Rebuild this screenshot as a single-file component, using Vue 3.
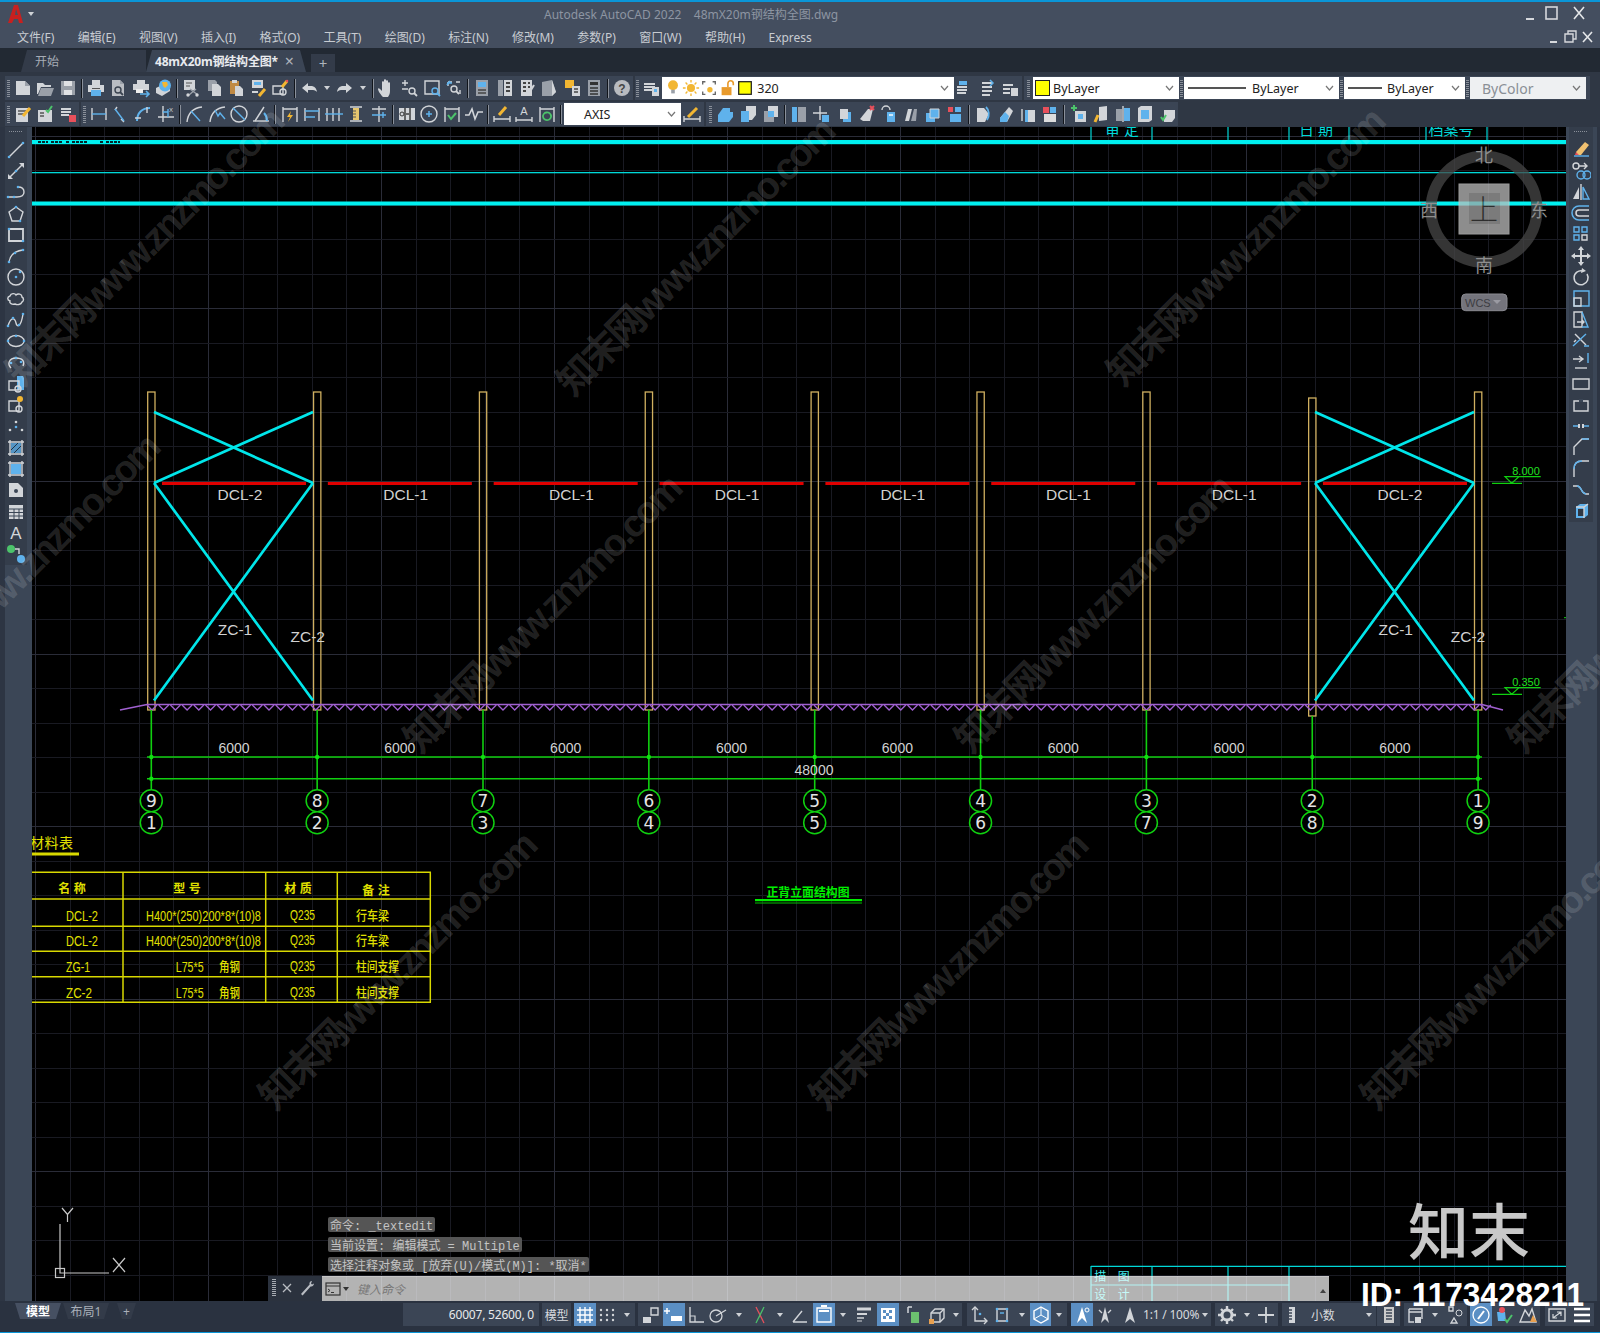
<template>
  <div class="app">
    <!-- title bar -->
    <div class="titlebar">
      <svg class="logo" width="16" height="20" viewBox="0 0 16 20"><path d="M6 1h4l5 18h-4l-1-4H6l-2 4H0z M7 11h3L8 5z" fill="#c8201f" fill-rule="evenodd" /></svg>
      <span class="logo-drop"></span>
      <span class="title">Autodesk AutoCAD 2022 &nbsp;&nbsp; 48mX20m钢结构全图.dwg</span>
      <svg class="winbtns" width="70" height="18" viewBox="0 0 70 18">
        <path d="M2 14h8" stroke="#d6d8dc" stroke-width="2" />
        <rect x="22" y="2" width="11" height="12" fill="none" stroke="#d6d8dc" stroke-width="1.6" />
        <path d="M50 2l10 12M60 2L50 14" stroke="#e4e6e8" stroke-width="1.6" />
      </svg>
    </div>
    <!-- menu -->
    <div class="menubar">
      <span v-for="m in menus" :key="m">{{ m }}</span>
      <svg class="docbtns" width="46" height="16" viewBox="0 0 46 16">
        <path d="M1 13h7" stroke="#d6d8dc" stroke-width="2" />
        <path d="M16 5h8v8h-8z M19 5V2h8v8h-3" fill="none" stroke="#d6d8dc" stroke-width="1.4" />
        <path d="M34 3l9 10M43 3l-9 10" stroke="#e4e6e8" stroke-width="1.6" />
      </svg>
    </div>
    <!-- file tabs -->
    <div class="tabbar">
      <div class="ftab home">开始</div>
      <div class="ftab active">48mX20m钢结构全图*<span class="tab-x">×</span></div>
      <div class="ftab plus">+</div>
    </div>
    <!-- toolbars -->
    <div class="toolbars">
      <div v-for="(row, ri) in rows" :key="ri" class="tb-row">
        <div v-for="(g, gi) in row" :key="gi" class="tb-group" :style="{ width: g.w + 'px' }">
          <template v-for="(it, i) in g.items" :key="i">
            <i v-if="it === '|'" class="sep"></i>
            <i v-else-if="it === ':'" class="grip"></i>
            <i v-else-if="it === '::'" class="grip wide"></i>
            <span v-else-if="it === 'v'" class="drop"></span>
            <div v-else-if="it.combo" class="combo" :class="{ dim: it.dim }" :style="{ width: it.combo + 'px' }">
              <svg v-for="ic in it.icons" :key="ic" class="ci" width="18" height="20" viewBox="0 0 20 20" v-html="icons[ic]"></svg>
              <i v-if="it.swatch" class="swatch"></i>
              <i v-if="it.line" class="lineweight" :style="{ width: it.line + 'px' }"></i>
              <span class="combo-text" :style="{ marginLeft: (it.ml || 0) + 'px' }">{{ it.text }}</span>
              <svg class="chev" width="9" height="6" viewBox="0 0 9 6"><path d="M1 1l3.5 4L8 1" fill="none" stroke="#777" stroke-width="1.2" /></svg>
            </div>
            <span v-else class="btn"><svg width="20" height="20" viewBox="0 0 20 20" v-html="icons[it]"></svg></span>
          </template>
        </div>
      </div>
    </div>
    <!-- middle -->
    <div class="main">
      <div class="side left">
        <div class="side-panel">
          <i class="hgrip"></i>
          <span v-for="ic in leftTools" :key="ic" class="side-btn"><svg width="20" height="20" viewBox="0 0 20 20" v-html="icons[ic]"></svg></span>
        </div>
      </div>
      <div class="canvas">
        <svg class="drawing" viewBox="32 127 1534 1174" width="1534" height="1174">
          <!-- grid -->
          <path v-for="x in gridX" :key="'x' + x.v" :d="`M${x.v} 127V1301`" :stroke="x.major ? '#2a2c38' : '#191a22'" shape-rendering="crispEdges" />
          <path v-for="y in gridY" :key="'y' + y.v" :d="`M32 ${y.v}H1566`" :stroke="y.major ? '#2a2c38' : '#191a22'" shape-rendering="crispEdges" />

          <!-- title block clipped at the top -->
          <path v-for="x in [1091, 1152, 1228, 1289, 1349, 1426, 1487]" :key="'t' + x" :d="`M${x} 127V142`" stroke="#00d8d8" stroke-width="1.2" />
          <text x="1122" y="135" class="cy">审 定</text>
          <text x="1316" y="135" class="cy">日 期</text>
          <text x="1451" y="135" class="cy">档案号</text>
          <rect x="32" y="140" width="1534" height="4.2" fill="#00f0f0" />
          <path d="M38 142h10M51 142h12M66 142h3M72 142h16M100 142h3M106 142h14" stroke="#03252b" stroke-width="2" stroke-dasharray="3 1" />
          <rect x="32" y="172" width="1534" height="1.3" fill="#00d8d8" />
          <rect x="32" y="201.5" width="1534" height="4" fill="#00f0f0" />

          <!-- columns -->
          <rect v-for="(c, i) in cols" :key="'c' + i" :x="c - 3.6" :y="i === 7 ? 398 : 392" width="7.3" :height="318" fill="none" stroke="#d0b060" stroke-width="1.3" />
          <!-- bracing -->
          <path v-for="b in bays" :key="'b' + b" :d="`M${b} 412L${b + 159} 483M${b + 159} 412L${b} 483M${b} 483L${b + 159} 700.5M${b + 159} 483L${b} 700.5`" fill="none" stroke="#00e6ea" stroke-width="2.7" />
          <!-- crane beams -->
          <rect v-for="i in 8" :key="'r' + i" :x="162 + (i - 1) * 165.85" y="482" width="144" height="3" fill="#e00000" />
          <text v-for="(l, i) in beams" :key="'l' + i" :x="240 + i * 165.7" y="499.5" class="lbl">{{ l }}</text>
          <text x="235" y="635" class="lbl">ZC-1</text>
          <text x="307.7" y="642" class="lbl">ZC-2</text>
          <text x="1395.7" y="635" class="lbl">ZC-1</text>
          <text x="1468" y="642" class="lbl">ZC-2</text>

          <!-- ground -->
          <path :d="zigzag" fill="none" stroke="#a060d0" stroke-width="1.3" />
          <path d="M120 710L147 704.5H1482L1503 710" fill="none" stroke="#a060d0" stroke-width="1.6" />

          <!-- dimensions -->
          <path v-for="(c, i) in cols" :key="'v' + i" :d="`M${c} ${i === 7 ? 716 : 710}V789`" stroke="#10d010" stroke-width="1.6" />
          <path d="M147 757H1482M147 778.7H1482" stroke="#10d010" stroke-width="1.5" />
          <circle v-for="(c, i) in cols" :key="'d' + i" :cx="c" cy="757" r="2.2" fill="#10e010" />
          <circle cx="151.3" cy="778.7" r="2.2" fill="#10e010" />
          <circle cx="1478" cy="778.7" r="2.2" fill="#10e010" />
          <text v-for="i in 8" :key="'n' + i" :x="234 + (i - 1) * 165.85" y="752.5" class="dim">6000</text>
          <text x="814" y="775" class="dim">48000</text>
          <g v-for="(c, i) in cols" :key="'a' + i">
            <circle :cx="c" cy="800.7" r="11" fill="#000" stroke="#10d010" stroke-width="1.5" />
            <circle :cx="c" cy="822.7" r="11" fill="#000" stroke="#10d010" stroke-width="1.5" />
            <text :x="c" y="807" class="axis-n">{{ 9 - i }}</text>
            <text :x="c" y="829" class="axis-n">{{ i + 1 }}</text>
          </g>

          <!-- levels -->
          <g v-for="lv in levels" :key="lv.t" :transform="`translate(0 ${lv.dy})`">
            <path d="M1505 476.7H1540.7M1505 476.7H1519L1511.7 483.3zM1492 483.3H1522" fill="none" stroke="#10d010" stroke-width="1.2" />
            <text x="1526" y="475" class="lvl">{{ lv.t }}</text>
          </g>

          <!-- material table -->
          <text x="30" y="848" class="ye title-y">材料表</text>
          <rect x="32" y="852.5" width="47" height="3" fill="#d8d800" />
          <path v-for="x in [123, 265.7, 337.3, 430.3]" :key="'tv' + x" :d="`M${x} 872.3V1002.3`" stroke="#d8d800" stroke-width="1.5" />
          <path v-for="y in [872.3, 899, 926.3, 951.3, 976.7, 1002.3]" :key="'th' + y" :d="`M32 ${y}H431`" stroke="#d8d800" stroke-width="1.5" />
          <text x="72" y="893" class="ye hd">名 称</text>
          <text x="187" y="893" class="ye hd">型 号</text>
          <text x="298" y="893" class="ye hd">材 质</text>
          <text x="376" y="895" class="ye hd">备 注</text>
          <g v-for="(r, i) in tableRows" :key="i">
            <text x="66" :y="r.y" class="ye" :textLength="r.aw" lengthAdjust="spacingAndGlyphs">{{ r.a }}</text>
            <text :x="r.bx" :y="r.y" class="ye" :textLength="r.bw" lengthAdjust="spacingAndGlyphs">{{ r.b }}</text>
            <text v-if="r.b2" x="219" :y="r.y - 1" class="ye cj" textLength="21" lengthAdjust="spacingAndGlyphs">{{ r.b2 }}</text>
            <text x="290" :y="r.y - 1" class="ye" textLength="25" lengthAdjust="spacingAndGlyphs">Q235</text>
            <text x="356" :y="r.y - 1" class="ye cj" :textLength="r.dw" lengthAdjust="spacingAndGlyphs">{{ r.d }}</text>
          </g>

          <!-- drawing title -->
          <text x="808" y="896.5" class="gtitle" textLength="83" lengthAdjust="spacingAndGlyphs">正背立面结构图</text>
          <rect x="755" y="899" width="107" height="2.2" fill="#00f000" />
          <rect x="755" y="902.5" width="107" height="1" fill="#00c000" />

          <!-- ucs icon -->
          <path d="M60 1224V1273H109" fill="none" stroke="#c8c8c8" stroke-width="1.2" />
          <rect x="55.5" y="1268.5" width="9" height="9" fill="none" stroke="#c8c8c8" stroke-width="1.2" />
          <path d="M62 1208l5.5 6.5L73 1208M67.5 1214.5V1222" fill="none" stroke="#c8c8c8" stroke-width="1.2" />
          <path d="M113 1258l12 14M125 1258l-12 14" stroke="#c8c8c8" stroke-width="1.2" />

          <!-- bottom title block -->
          <path d="M1091 1266.3H1566M1091 1285H1289" stroke="#00d8d8" stroke-width="1.2" />
          <path v-for="x in [1091, 1152, 1228, 1289]" :key="'bt' + x" :d="`M${x} 1266V1301`" stroke="#00d8d8" stroke-width="1.2" />
          <text x="1112" y="1281" class="cy sm">描 图</text>
          <text x="1112" y="1299" class="cy sm">设 计</text>

          <!-- view cube -->
          <g class="cube">
            <circle cx="1484" cy="209.3" r="53" fill="none" stroke="#474747" stroke-width="11" />
            <rect x="1459" y="184" width="50" height="50" fill="#bdbdbd" stroke="#cfcfcf" />
            <rect x="1469" y="193" width="31" height="31" fill="#a4a4a4" />
            <text x="1484" y="220" class="cube-top">上</text>
          </g>
          <text x="1484" y="162" class="cube-d">北</text>
          <text x="1484" y="272" class="cube-d">南</text>
          <text x="1429" y="217" class="cube-d">西</text>
          <text x="1539" y="217" class="cube-d">东</text>
          <rect x="1461.7" y="294" width="45.3" height="16.7" rx="4" fill="#74747c" stroke="#8a8a90" />
          <text x="1465" y="306.5" class="wcs">WCS</text>
          <path d="M1493 300h8l-4 4z" fill="#9a9aa2" />
          <path d="M1564 617.7h2" stroke="#10d010" />
        </svg>

        <!-- command line -->
        <div class="cmd-hist">
          <div><span>命令: _textedit</span></div>
          <div><span>当前设置: 编辑模式 = Multiple</span></div>
          <div><span>选择注释对象或 [放弃(U)/模式(M)]: *取消*</span></div>
        </div>
        <div class="cmd-bar">
          <div class="cmd-left">
            <i class="cmd-grip"></i>
            <svg width="12" height="12" viewBox="0 0 12 12"><path d="M2 2l8 8M10 2l-8 8" stroke="#b8bcc2" stroke-width="1.3" /></svg>
            <svg width="18" height="18" viewBox="0 0 18 18"><path d="M14 2c-2 0-3 2-2.4 3.6L3 15l1.6 1.4 8-9C14.500 8 16 6 16 4.500l-2 1-1-1z" fill="#b8bcc2" /></svg>
          </div>
          <div class="cmd-input">
            <svg width="16" height="14" viewBox="0 0 16 14"><rect x="1" y="1" width="14" height="12" fill="none" stroke="#333" stroke-width="1.2" /><path d="M1 4h14M3 7l2 1.500L3 10M6 10.500h3" stroke="#333" fill="none" /></svg>
            <span class="small-drop"></span>
            <span class="prompt">键入命令</span>
            <span class="up-arrow"></span>
          </div>
        </div>
      </div>
      <div class="side right">
        <div class="side-panel">
          <i class="hgrip"></i>
          <span v-for="ic in rightTools" :key="ic" class="side-btn"><svg width="20" height="20" viewBox="0 0 20 20" v-html="icons[ic]"></svg></span>
        </div>
      </div>
    </div>
    <!-- status bar -->
    <div class="statusbar">
      <div class="layouts">
        <span class="ltab on">模型</span>
        <span class="ltab">布局1</span>
        <span class="ltab add">+</span>
      </div>
      <div v-for="(g, gi) in statusGroups" :key="gi" class="st-group" :style="{ marginLeft: g.gap + 'px' }">
        <template v-for="(it, i) in g.items" :key="i">
          <span v-if="it.t" class="st-text" :class="{ right: it.right, left: it.left }" :style="{ width: it.w + 'px' }">{{ it.t }}</span>
          <span v-else-if="it.d" class="st-drop" :style="{ width: it.d + 'px' }"></span>
          <span v-else class="st-btn" :class="{ on: it.on }" :style="{ width: it.w + 'px' }"><svg width="20" height="20" viewBox="0 0 20 20" v-html="icons[it.i]"></svg></span>
        </template>
      </div>
    </div>
    <!-- watermark on top of the whole shot -->
    <svg class="wm" width="1600" height="1333" viewBox="0 0 1600 1333">
      <text v-for="(p, i) in marks" :key="i" :transform="`translate(${p[0]} ${p[1]}) rotate(-45)`" class="wm-text" textLength="375">知末网www.znzmo.com</text>
      <text x="1408" y="1255" class="brand">知末</text>
      <text x="1361" y="1306" class="brand-id" textLength="223" lengthAdjust="spacingAndGlyphs">ID: 1173428211</text>
    </svg>
  </div>
</template>

<script setup>
const W = "#d2d5d9";
const G = "#9aa0a9";
const B = "#5fb2ec";
const Y = "#f2b632";
const R = "#e8505b";
const N = "#4cc36b";

// small svg string helpers
const s = (d, c = W, w = 1.4) => `<path d="${d}" fill="none" stroke="${c}" stroke-width="${w}"/>`;
const f = (d, c = W) => `<path d="${d}" fill="${c}"/>`;
const dot = (x, y, c = B) => `<circle cx="${x}" cy="${y}" r="1.3" fill="${c}"/>`;
const mag = (x, y, c = W) => `<circle cx="${x}" cy="${y}" r="3" fill="none" stroke="${c}" stroke-width="1.4"/>` + s(`M${x + 2} ${y + 2}l3 3`, c, 1.8);
const page = (c = W) => f("M4 2h8l4 4v12H4z", c) + f("M12 2v4h4z", G);
const dimH = s("M3 4v12M17 4v12", W) + s("M3 10h14", B);

const icons = {
  new: f("M3 3h9l5 5v9H3z") + f("M12 3v5h5z", G),
  open: f("M2 5h6l2 2h6v2H6l-3 7H2z", W) + f("M6 10h13l-3 8H3z", G),
  save: f("M3 3h14v14H3z", G) + f("M6 3h8v5H6z", "#e0e2e5") + f("M6 12h8v5H6z", "#e0e2e5"),
  print: f("M6 2h8v5H6z") + f("M2 7h16v7H2z", W) + f("M5 12h10v6H5z", B) + f("M6 10h8v1H6z", "#555"),
  preview: page("#b9bdc3") + mag(10, 12, "#3a4350"),
  plot: f("M6 2h8v4H6z") + f("M2 6h16v6H2z", W) + f("M5 11h7v4H5z", "#eee") + s("M9 16h9M15 13l3 3-3 3", B, 1.6),
  globe: f("M3 10l6-3 8 3v3l-8 5-6-3z", W) + `<circle cx="12" cy="7.500" r="6" fill="${B}"/>` + f("M9 4l5 0 1 3-3 3-2-2z", Y),
  cut: f("M3 2h11v10H3z", W) + s("M5 5h6M5 8h4", "#555", 1) + s("M9 11l8 6M15 11l-7 6", G) + `<circle cx="7" cy="17" r="1.700" fill="${W}"/><circle cx="16" cy="17" r="1.700" fill="${W}"/>`,
  copy: f("M4 2h7l2 2v9H4z", G) + f("M8 6h6l3 3v9H8z", W),
  paste: f("M4 3h9v13H4z", "#c08a44") + f("M6 2h5v3H6z", W) + f("M9 8h5l3 3v7H9z", W),
  matchdoc: f("M4 2h11v8H4z", W) + f("M6 4h7v3H6z", B) + s("M4 14h6", W, 2) + s("M11 18l6-7", Y, 3),
  block: s("M3 8h10v8H3z", W) + `<circle cx="13" cy="14" r="3" fill="none" stroke="${W}" stroke-width="1.4"/>` + s("M12 9l5-6", Y, 3) + dot(17, 3, R),
  undo: f("M9 5L3 10l6 5v-3h5c2 0 3 1 4 2-.5-4-3-6-6-6H9z"),
  redo: f("M11 5l6 5-6 5v-3H6c-2 0-3 1-4 2 .5-4 3-6 6-6h3z"),
  pan: f("M6 19c-2-2-5-6-5-8 0-1 1-1 2 0l2 2V4c0-1 2-1 2 0v5V2c0-1 2-1 2 0v7V3c0-1 2-1 2 0v6-4c0-1 2-1 2 0v8c0 3-1 4-2 6z"),
  zoomreal: s("M5 2v6M2 5h6M2 11h6", W) + mag(12, 13),
  zoomwin: s("M3 3h14v13H3z", W) + mag(13, 13, B),
  zoomprev: s("M4 4h4M12 4h4M4 4v4M16 16v-4", W) + s("M3 7l3-4M8 5H3", B, 1.6) + mag(10, 11),
  props: f("M4 2h12v16H4z", G) + f("M6 4h8v5H6z", B) + s("M6 12h8M6 15h8", "#444", 1.400),
  design: f("M3 2h5v16H3z", G) + f("M9 2h8v16H9z", W) + s("M11 5h4M11 9h4M11 13h4", "#444", 2),
  toolp: f("M4 2h11v16H4z", W) + s("M6 5h3M6 9h3M6 13h3M11 5h2M11 9h2", "#444", 2) + s("M17 7l-3 5", W, 2),
  sheet: f("M3 4l10-2 4 12-4 4H3z", G) + f("M13 2l4 12-4 4z", W),
  markup: f("M3 2h9v8H3z", Y) + f("M10 8h8v10h-8z", W) + s("M12 11h4M12 14h4", "#444"),
  calc: f("M4 2h12v16H4z", G) + f("M6 4h8v3H6z", "#333") + s("M6 10h8M6 13h8M6 16h8", "#333", 1.500),
  help: `<circle cx="10" cy="10" r="8" fill="#b8bbc0"/><text x="10" y="14.500" text-anchor="middle" font-size="12" font-weight="700" font-family="Liberation Sans" fill="#444">?</text>`,
  layer: s("M3 6h11M3 9h11M3 12h9", W, 2) + f("M11 9h7v9h-7z", W) + f("M13 11h3v3h-3z", B),
  bulb: `<circle cx="10" cy="7" r="5.500" fill="${Y}"/>` + f("M8 12h4v4H8z", G),
  sun: `<circle cx="10" cy="10" r="4.500" fill="${Y}"/>` + s("M10 1v3M10 16v3M1 10h3M16 10h3M4 4l2 2M14 14l2 2M16 4l-2 2M4 16l2-2", Y, 1.500),
  freeze: s("M3 6V3h3M14 3h3v3M3 14v3h3M14 17h3v-3", "#666", 1.500) + `<circle cx="11" cy="12" r="3" fill="${Y}"/>`,
  lock: f("M4 9h11v9H4z", "#e89a2c") + s("M11 9V5a3 3 0 0 1 6 0v2", "#e89a2c", 1.8),
  colorbox: `<rect x="3" y="3" width="14" height="14" fill="#ffff00" stroke="#222" stroke-width="1.400"/>`,
  setlayer: s("M2 15h9M2 12h10M2 9h10", W, 2) + f("M4 3h8v4H4z", B),
  isolate: s("M4 5h10M4 9h10M4 13h10M4 17h8", W, 1.800) + s("M12 2l3 3-3 3", B, 1.500),
  layoff: s("M3 7h10M3 11h7M3 15h7", W, 2) + f("M11 10h7v8h-7z", W),
  mp: f("M3 4h12v14H3z", W) + s("M5 7h8M5 10h8", "#555") + s("M10 12l7-8", Y, 3),
  chk: f("M3 6h14v12H3z", W) + s("M5 9h4M5 12h4", "#555") + s("M11 6l2 2 4-6", N, 2),
  lstate: s("M3 5h10M3 8h10M3 11h8", W, 2) + f("M11 11h7v7h-7z", R),
  dimlin: dimH,
  dimali: s("M4 6l2-3M10 15l3 3", W) + s("M4 5l9 12", B),
  dimarc: s("M3 17c0-8 5-13 13-13", B, 2) + s("M1 14h6M13 3v6", W),
  dimord: s("M7 2v16M2 13h16", W) + s("M7 8h5M12 5v8", B) + `<text x="13" y="8" font-size="6" fill="${W}" font-family="Liberation Sans">X</text>`,
  dimrad: s("M3 18C4 9 9 4 18 3", W) + s("M7 7l9 10", B),
  dimjog: s("M3 18C4 9 9 4 18 3", W) + s("M8 6l3 6 2-3 5 6", B),
  dimdia: `<circle cx="10" cy="10" r="8" fill="none" stroke="${W}" stroke-width="1.400"/>` + s("M4 4l12 12", B),
  dimang: s("M2 17h16", W) + s("M4 17L13 3", W) + s("M13 9c2 2 3 5 3 8", B, 2),
  dimquick: s("M3 3v15M17 3v15M3 5h14", W) + f("M11 7l-4 6h3l-2 5 5-7h-3z", Y),
  dimbase: s("M3 4v13M17 4v13", W) + s("M3 7h14M3 13h10", B),
  dimcont: s("M3 4v13M9 4v13M15 4v13", W) + s("M1 10h18", B),
  dimspace: s("M4 3h12M4 17h12", W) + f("M7 4h6v12H7z", "#e6c66e") + s("M7 7h3M7 10h3M7 13h3", "#555", 1),
  dimbreak: s("M10 2v16M3 5h14", W) + s("M3 11h14M14 8v6", B),
  tol: f("M2 4h16v12H2z", W) + s("M8 4v12M13 4v12", "#333") + `<circle cx="5" cy="10" r="2" fill="none" stroke="#333"/>` + s("M9 10h3", "#333"),
  center: `<circle cx="10" cy="10" r="8" fill="none" stroke="${W}" stroke-width="1.400"/>` + s("M7 10h6M10 7v6", B, 1.500),
  inspect: s("M3 3v15M17 3v15M3 5h14", W) + s("M6 11l3 4 5-6", N, 2),
  jogline: s("M1 11h4l3-6 3 10 3-7h5", W, 1.600),
  dimedit: s("M2 18V12M18 18V12M2 15h16", W) + s("M7 11l7-8", Y, 3),
  dimtext: s("M2 18v-5M18 18v-5M2 16h16", W) + `<text x="10" y="11" text-anchor="middle" font-size="11" font-family="Liberation Sans" fill="${W}">A</text>`,
  dimupd: s("M3 3v15M17 3v15M3 5h14", W) + s("M6 13a4 4 0 0 1 8-1M14 11a4 4 0 0 1-8 2", N, 1.800),
  dimstyle: s("M2 18v-6M18 18v-6M2 15h16", W) + s("M6 13l9-9", Y, 3),
  union: f("M2 11l5-7h7v7l-5 7H2z", B) + f("M8 8h9v5l-4 5H8z", B),
  subtract: f("M8 2h10v9l-4 5H8z", W) + f("M3 7h8v11H3z", B),
  inter: f("M7 2h10v11H7z", W) + f("M3 7h10v11H3z", G) + f("M7 7h6v6H7z", B),
  surf: f("M3 3h5v15H3z", B) + f("M9 3h8v15H9z", G),
  move3: s("M9 2v14M2 9h14", W, 1.400) + f("M11 11h7v7h-7z", B),
  rot3: f("M9 8h8v10H9z", B) + f("M6 5h8v10H6z", W),
  solidx: f("M4 15L12 5h5l-3 12H7z", W) + s("M14 2l4 4M18 2l-4 4", R, 2),
  rotf: s("M4 6a4 4 0 0 1 8 0", W) + f("M9 8h8v10H9z", B) + s("M11 11h4", "#fff"),
  slice: f("M4 17L7 5h4l-3 12z", W) + f("M10 17l3-12h3l-1 12z", G),
  stack: f("M3 9h9v9H3z", B) + f("M7 5h9v9H7z", B) + s("M7 5h9v9H7z", W, 1),
  mcolor: f("M3 3h5v5H3z", R) + f("M10 3h6v5h-6z", B) + f("M5 10h11v8H5z", B),
  cham: f("M4 18V4h7l5 6-4 8z", W) + s("M13 3c3 3 4 8 1 13", B, 1.800),
  fil: f("M4 14l9-11 4 4-6 11H4z", W) + f("M4 14l5-6 4 4-2 6H4z", B),
  extr: s("M4 5v12", W) + f("M7 6h3v12H7z", B) + f("M10 6h7v12h-7z", W),
  mface: f("M3 3h6v6H3z", R) + f("M10 3h6v6h-6z", B) + f("M4 10h12v8H4z", "#ddd"),
  addb: s("M5 1v6M2 4h6", N, 2) + f("M6 7h11v11H6z", W) + f("M9 10h5v5H9z", B),
  brush: f("M8 3l8-1v14l-8 1z", W) + s("M7 11l-3 7", Y, 3),
  splitf: f("M3 5h6v12H3z", G) + f("M11 4h6v13h-6z", B) + s("M10 2v16", W),
  shellf: f("M3 4l3-2h11v14l-3 2H3z", W) + f("M6 6h8v9H6z", B),
  checkf: f("M6 6h11v8l-3 4H6z", W) + s("M3 13l2 3 3-5", N, 2),
  // left palette
  line: s("M3 17L17 3", W) + dot(3, 17) + dot(17, 3),
  xline: s("M3 17L17 3", W) + f("M13 2h5v5z") + f("M2 13v5h5z") + dot(10, 10),
  pline: s("M2 15h9c5 0 7-2 7-5s-2-5-6-5", W) + dot(2, 15) + dot(8, 15) + dot(12, 5),
  polygon: s("M10 3l7 5-3 9H6L3 8z", W) + dot(14, 17) + dot(10, 3),
  rect: s("M3 4h14v12H3z", W, 1.800) + dot(3, 4) + dot(17, 16),
  arc: s("M3 16C4 9 9 5 17 4", W) + dot(3, 16) + dot(9, 7) + dot(17, 4),
  circle: `<circle cx="10" cy="10" r="8" fill="none" stroke="${W}" stroke-width="1.400"/>` + dot(10, 10) + dot(14, 5),
  cloud: s("M4 7c1-3 5-3 6-1 2-2 6-1 6 2 2 1 2 4 0 5-1 3-5 3-7 2-3 1-6-1-5-3-3-1-3-4 0-5z", W),
  spline: s("M2 16c3-10 7-8 8-3s5 4 7-9", W) + dot(2, 16) + dot(7, 8) + dot(13, 15) + dot(17, 4),
  ellipse: `<ellipse cx="10" cy="10" rx="8" ry="5.500" fill="none" stroke="${W}" stroke-width="1.300"/>` + dot(2, 10) + dot(18, 10) + dot(10, 5),
  earc: s("M5 15C1 11 3 5 10 5s9 4 7 8", W) + dot(10, 5) + dot(5, 10) + dot(15, 9),
  insert: f("M11 2h6l1 2v12h-7z", B) + s("M3 7h10v9H3z", W) + `<circle cx="12" cy="15" r="3" fill="none" stroke="${W}" stroke-width="1.400"/>`,
  mkblock: s("M3 6h10v10H3z", W) + `<circle cx="13" cy="14" r="3" fill="none" stroke="${W}" stroke-width="1.400"/>` + `<circle cx="14" cy="4" r="3" fill="${Y}"/>`,
  point: dot(10, 5, W) + dot(4, 13, W) + dot(16, 13, W) + dot(10, 10, B),
  hatch: s("M4 2v16M16 2v16M2 4h16M2 16h16", W) + `<rect x="5" y="5" width="10" height="10" fill="${B}" opacity=".75"/>` + s("M5 12l7-7M8 15l7-7", "#234", 1),
  grad: s("M4 2v16M16 2v16M2 4h16M2 16h16", W) + f("M5 5h10v10H5z", B),
  region: f("M3 3h9l5 5v9H3z") + `<circle cx="10" cy="11" r="2" fill="#3b4656"/>`,
  table: f("M3 3h14v14H3z") + s("M3 7h14M3 10.500h14M3 14h14M8 7v10M13 7v10", "#3b4656", 1),
  mtext: `<text x="10" y="16" text-anchor="middle" font-size="17" font-family="Liberation Sans" fill="${W}">A</text>`,
  addsel: `<circle cx="5" cy="5" r="4" fill="${N}"/><circle cx="15" cy="15" r="4" fill="${B}"/>` + s("M9 5h4v5", W),
  // right palette
  erase: s("M3 17h15", B) + f("M5 13L14 3l4 3-8 10H6z", "#f0c070") + f("M5 13l3 3H4z", R),
  copyobj: `<circle cx="5" cy="5" r="3" fill="none" stroke="${W}" stroke-width="1.400"/>` + s("M8 5h8M13 2l3 3-3 3", W) + `<circle cx="10" cy="14" r="4" fill="none" stroke="${B}" stroke-width="1.400"/><circle cx="16" cy="14" r="4" fill="none" stroke="${B}" stroke-width="1.400"/>`,
  mirr: s("M10 2v16", W) + f("M8 5v12H2z", W) + s("M12 5v12h6z", B),
  offset: s("M18 3H8a7 7 0 0 0 0 14h10", B, 1.500) + s("M18 7H8a3 3 0 0 0 0 6h10", W, 1.500),
  array: s("M3 3h5v5H3zM11 3h5v5h-5zM3 11h5v5H3z", B) + s("M11 11h5v5h-5z", W),
  move: s("M10 2v16M2 10h16", W, 2) + f("M10 0l3 4H7zM10 20l-3-4h6zM0 10l4-3v6zM20 10l-4 3V7z"),
  rotate: s("M16 7a7 7 0 1 1-4-3", W, 1.500) + f("M11 1l4 3-5 2z"),
  scale: s("M3 3h15v15H3z", B) + s("M3 10h7v8H3z", W),
  stretch: s("M3 2h8v15H3z", W) + s("M11 2l6 15h-6", B) + s("M6 12h7M11 10l2 2-2 2", W),
  trim: s("M4 3l11 11", W) + s("M2 15L15 3M13 15h5", B) + s("M5 9l-2 2", W),
  extend: s("M2 7h10M8 4l4 3-4 3", W) + s("M17 1v10", B) + s("M4 16h12", W),
  breakp: s("M2 5h16V15H2z", W),
  brk: s("M3 6h14v10H3z", W) + f("M8 4h4v3H8z", "#3b4656"),
  join: s("M2 10h5M13 10h5", B) + f("M7 8h2v4H7zM11 8h2v4h-2z", W),
  chamfer: s("M3 18v-8l8-8h7", W) + s("M11 2h7", B),
  fillet: s("M3 18V10c0-5 3-8 8-8h7", W) + s("M3 10c0-5 3-8 8-8", B),
  blend: s("M2 6h4c5 0 4 8 9 8h3", W) + s("M6 6c5 0 4 8 9 8", B),
  explode: f("M5 6l4-3h8v11l-4 3H5z", B) + f("M7 8h6v7H7z", "#2e3743") + s("M5 6h8v11M13 6l4-3", W),
  // status bar
  grid: s("M5 2v16M10 2v16M15 2v16M2 5h16M2 10h16M2 15h16", "#fff", 1.400),
  snap: `<g fill="${W}"><circle cx="4" cy="5" r="1.200"/><circle cx="10" cy="5" r="1.200"/><circle cx="16" cy="5" r="1.200"/><circle cx="4" cy="10" r="1.200"/><circle cx="10" cy="10" r="1.200"/><circle cx="16" cy="10" r="1.200"/><circle cx="4" cy="15" r="1.200"/><circle cx="10" cy="15" r="1.200"/><circle cx="16" cy="15" r="1.200"/></g>`,
  mspace: f("M2 12h8v6H2z") + s("M10 10V3h7v7z", W),
  infer: s("M3 3v6M0 6h6", "#fff", 1.500) + f("M7 11h11v5H7z", "#fff"),
  ortho: s("M4 2v15h14", W) + s("M4 11h5v6", W, 1.200),
  polar: `<circle cx="8" cy="11" r="6" fill="none" stroke="${W}" stroke-width="1.300"/>` + s("M8 11L18 5", W),
  osnapt: s("M6 2l8 16", R, 1.300) + s("M14 2L6 18", N, 1.300),
  iso: s("M2 17h14M2 17l9-11", W),
  dyn: s("M3 3h14v14H3z", "#fff") + s("M7 1h6", "#fff", 2) + f("M5 5h10v2H5z", "#fff"),
  lw: s("M3 4h14", W, 3) + s("M3 9h10", W, 2) + s("M3 13h7", W, 1.500) + s("M3 16h5", W, 1),
  transp: f("M3 3h14v14H3z", "#fff") + `<path d="M5 5h3v3H5zM11 5h3v3h-3zM8 8h3v3H8zM5 11h3v3H5zM11 11h3v3h-3z" fill="#5b8fc4"/>`,
  qs: f("M8 7h8v11H8z", "#6cc06f") + s("M5 2h4M5 2v6", W, 1.500),
  cycle: s("M3 8l4-4h9v9l-4 4H3z", W) + s("M3 8h9v9M12 8l4-4", W) + f("M1 14h5v5H1z", "#e8a050"),
  ucsd: s("M6 2v14h12", W) + s("M3 5l3-3 3 3M15 13l3 3-3 3", W) + dot(11, 9),
  gizmo: s("M5 4h10v12H5z", W) + dot(5, 4) + dot(15, 4) + dot(5, 16) + dot(15, 16) + s("M8 8h4", B),
  view: s("M10 2l7 4v8l-7 4-7-4V6z", "#fff", 1.400) + s("M10 10V2M10 10l7 4M10 10l-7 4", "#fff", 1),
  anno: f("M10 2l5 16-5-5-5 5z", "#fff") + `<circle cx="15" cy="5" r="2" fill="none" stroke="#fff"/>`,
  annoAuto: f("M10 2l4 16-4-4-4 4z") + s("M4 5l3 3M16 5l-3 3", W),
  annoPlain: f("M10 2l5 16-5-4-5 4z"),
  gear: `<circle cx="10" cy="10" r="5" fill="none" stroke="${W}" stroke-width="3"/>` + s("M10 1v4M10 15v4M1 10h4M15 10h4M4 4l2.500 2.500M13.500 13.500L16 16M16 4l-2.500 2.500M4 16l2.500-2.500", W, 2.400),
  plus: s("M10 2v16M2 10h16", W, 1.800),
  ruler: f("M6 2h6v16H6z") + s("M6 5h3M6 8h3M6 11h3M6 14h3", "#3b4656", 1.300),
  qprops: f("M5 2h10v16H5z", "#ccc") + s("M7 5h6M7 8h6M7 11h6M7 14h6", "#3b4656", 1.300),
  lockui: s("M3 4h13v10", W) + s("M3 4v13h5M3 7h13", W) + f("M9 12h6v6H9z"),
  isoobj: s("M4 2h4v4H4z", W) + `<circle cx="14" cy="8" r="3" fill="none" stroke="${W}"/>` + s("M6 18l3-5 3 5z", W),
  hwacc: `<circle cx="10" cy="10" r="8" fill="none" stroke="#fff" stroke-width="1.300"/>` + s("M7 14l6-8", "#fff", 2),
  cleani: f("M3 7h8l1 9H4z", B) + `<circle cx="8" cy="5" r="3" fill="${R}"/>` + s("M11 14l2 3 5-7", N, 2),
  mount: s("M2 17l5-12 4 6 3-7 4 13z", W) + f("M12 17l3-7 4 7z", "#e8a050"),
  fullsc: s("M2 4h16v12H2z", W) + s("M6 13l8-6M10 7h4v4M6 9v4h4", W, 1.200),
  menu: s("M2 4h16M2 10h16M2 16h16", "#fff", 2.400),
};

const menus = ["文件(F)", "编辑(E)", "视图(V)", "插入(I)", "格式(O)", "工具(T)", "绘图(D)", "标注(N)", "修改(M)", "参数(P)", "窗口(W)", "帮助(H)", "Express"];

const rows = [
  [
    { w: 628, items: [":", "new", "open", "save", "|", "print", "preview", "plot", "globe", "|", "cut", "copy", "paste", "matchdoc", "block", "|", "undo", "v", "redo", "v", "|", "pan", "zoomreal", "zoomwin", "zoomprev", "|", "props", "design", "toolp", "sheet", "markup", "calc", "|", "help"] },
    { w: 387, items: [":", "layer", { combo: 292, icons: ["bulb", "sun", "freeze", "lock", "colorbox"], text: "320", ml: 3 }, "setlayer", "isolate", "layoff"] },
    { w: 566, items: ["::", { combo: 146, swatch: true, text: "ByLayer", ml: 3 }, ":", { combo: 155, line: 58, text: "ByLayer", ml: 6 }, ":", { combo: 121, line: 34, text: "ByLayer", ml: 5 }, ":", { combo: 116, text: "ByColor", ml: 10, dim: true }] },
  ],
  [
    { w: 74, items: [":", "mp", "chk", "lstate"] },
    { w: 623, items: [":", "dimlin", "dimali", "dimarc", "dimord", "|", "dimrad", "dimjog", "dimdia", "dimang", "|", "dimquick", "dimbase", "dimcont", "dimspace", "dimbreak", "|", "tol", "center", "inspect", "jogline", "|", "dimedit", "dimtext", "dimupd", "|", { combo: 117, text: "AXIS", ml: 18 }, "dimstyle"] },
    { w: 472, items: ["::", "union", "subtract", "inter", "|", "surf", "move3", "rot3", "solidx", "rotf", "slice", "stack", "mcolor", "|", "cham", "fil", "extr", "mface", "|", "addb", "brush", "splitf", "shellf", "checkf"] },
  ],
];

const leftTools = ["line", "xline", "pline", "polygon", "rect", "arc", "circle", "cloud", "spline", "ellipse", "earc", "insert", "mkblock", "point", "hatch", "grad", "region", "table", "mtext", "addsel"];
const rightTools = ["erase", "copyobj", "mirr", "offset", "array", "move", "rotate", "scale", "stretch", "trim", "extend", "breakp", "brk", "join", "chamfer", "fillet", "blend", "explode"];

const statusGroups = [
  { gap: 0, items: [{ t: "60007, 52600, 0", w: 136, right: true }] },
  { gap: 3, items: [{ t: "模型", w: 29 }] },
  { gap: 3, items: [{ i: "grid", w: 22, on: true }, { i: "snap", w: 22 }, { d: 17 }] },
  { gap: 3, items: [{ i: "mspace", w: 25 }, { i: "infer", w: 22, on: true }, { i: "ortho", w: 22 }, { i: "polar", w: 22 }, { d: 20 }, { i: "osnapt", w: 22 }, { d: 18 }, { i: "iso", w: 24 }, { i: "dyn", w: 22, on: true }, { d: 16 }, { i: "lw", w: 26 }, { i: "transp", w: 22, on: true }, { i: "qs", w: 28 }, { i: "cycle", w: 22 }, { d: 13 }] },
  { gap: 5, items: [{ i: "ucsd", w: 24 }, { i: "gizmo", w: 22 }, { d: 17 }, { i: "view", w: 21, on: true }, { d: 16 }] },
  { gap: 4, items: [{ i: "anno", w: 22, on: true }, { i: "annoAuto", w: 24 }, { i: "annoPlain", w: 26 }, { t: "1:1 / 100%", w: 56 }, { d: 12 }] },
  { gap: 4, items: [{ i: "gear", w: 24 }, { d: 15 }, { i: "plus", w: 24 }] },
  { gap: 4, items: [{ i: "ruler", w: 22 }, { t: "小数", w: 57, left: true }, { d: 15 }] },
  { gap: 1, items: [{ i: "qprops", w: 23 }] },
  { gap: 4, items: [{ i: "lockui", w: 24 }, { d: 14 }, { i: "isoobj", w: 25 }] },
  { gap: 3, items: [{ i: "hwacc", w: 22, on: true }, { i: "cleani", w: 24 }, { i: "mount", w: 24 }] },
  { gap: 5, items: [{ i: "fullsc", w: 24 }, { i: "menu", w: 25 }] },
];

// drawing data
const cols = Array.from({ length: 9 }, (_, i) => 151.3 + i * 165.85);
const bays = [154, 1315];
const beams = ["DCL-2", "DCL-1", "DCL-1", "DCL-1", "DCL-1", "DCL-1", "DCL-1", "DCL-2"];
const levels = [
  { t: "8.000", dy: 0 },
  { t: "0.350", dy: 211 },
];
const tableRows = [
  { y: 921, a: "DCL-2", aw: 32, b: "H400*(250)200*8*(10)8", bx: 146, bw: 115, d: "行车梁", dw: 33 },
  { y: 946, a: "DCL-2", aw: 32, b: "H400*(250)200*8*(10)8", bx: 146, bw: 115, d: "行车梁", dw: 33 },
  { y: 972, a: "ZG-1", aw: 24, b: "L75*5", b2: "角钢", bx: 175.7, bw: 28, d: "柱间支撑", dw: 43 },
  { y: 998, a: "ZC-2", aw: 26, b: "L75*5", b2: "角钢", bx: 175.7, bw: 28, d: "柱间支撑", dw: 43 },
];

const gridX = [];
for (let k = -5; k < 40; k++) {
  const v = Math.round(208 + k * 34.6) + 0.5;
  gridX.push({ v, major: (k + 5) % 5 === 0 });
}
const gridY = [];
for (let k = -10; k < 25; k++) {
  const v = Math.round(481 + k * 34.52) + 0.5;
  gridY.push({ v, major: (k + 10) % 5 === 0 });
}

let zz = "";
for (let x = 147; x < 1482; x += 11.7) {
  zz += `M${x.toFixed(1)} 705L${(x + 5).toFixed(1)} 710L${(x + 10).toFixed(1)} 705`;
}
const zigzag = zz;

const marks = [
  [22, 388], [573, 398], [1123, 388],
  [-102, 714], [420, 755], [971, 755], [1524, 755],
  [275, 1112], [826, 1112], [1377, 1112],
];
</script>

<style>
html,
body {
  margin: 0;
  background: #000;
}
</style>

<style scoped>
.app {
  position: relative;
  width: 1600px;
  height: 1333px;
  display: flex;
  flex-direction: column;
  overflow: hidden;
  background: #3f4959;
  font-family: "Noto Sans", "Noto Sans CJK SC", sans-serif;
  font-size: 12px;
  color: #c8ccd2;
}

.titlebar {
  height: 24px;
  flex: none;
  border-top: 2px solid #0a96d8;
  display: flex;
  align-items: center;
  padding-left: 8px;
  background: #444e5f;
  box-sizing: content-box;
}
.logo {
  flex: none;
}
.logo-drop {
  margin-left: 4px;
  width: 0;
  height: 0;
  border: 3px solid transparent;
  border-top: 4px solid #cfd2d6;
  margin-top: 3px;
}
.title {
  margin-left: 510px;
  color: #8d95a2;
  white-space: nowrap;
}
.winbtns {
  margin-left: auto;
  margin-right: 6px;
}

.menubar {
  height: 22px;
  flex: none;
  display: flex;
  align-items: center;
  gap: 23.4px;
  padding-left: 17px;
  background: #444e5f;
}
.menubar span {
  white-space: nowrap;
}
.docbtns {
  margin-left: auto;
  margin-right: 5px;
}

.tabbar {
  height: 24px;
  flex: none;
  display: flex;
  align-items: flex-end;
  background: #222933;
  padding-left: 21px;
}
.ftab {
  height: 22px;
  display: flex;
  align-items: center;
  box-sizing: border-box;
}
.ftab.home {
  width: 125px;
  padding-left: 14px;
  background: #333b49;
  color: #a6acb6;
  clip-path: polygon(6px 0, 100% 0, 100% 100%, 0 100%);
}
.ftab.active {
  width: 160px;
  padding-left: 9px;
  background: #3b4555;
  color: #e8eaee;
  font-weight: 700;
  letter-spacing: -0.2px;
  clip-path: polygon(6px 0, calc(100% - 6px) 0, 100% 100%, 0 100%);
}
.tab-x {
  margin-left: 7px;
  font-weight: 400;
  font-size: 16px;
  color: #aeb3bb;
}
.ftab.plus {
  margin-left: 5px;
  width: 24px;
  height: 18px;
  justify-content: center;
  background: #333b49;
  font-size: 15px;
  color: #aeb3bb;
}

.toolbars {
  flex: none;
  height: 55px;
  background: #2f3744;
  padding-top: 4px;
  padding-left: 5px;
  box-sizing: border-box;
  display: flex;
  flex-direction: column;
  gap: 2px;
}
.tb-row {
  display: flex;
  gap: 2px;
}
.tb-group {
  height: 24px;
  flex: none;
  display: flex;
  align-items: center;
  background: #3b4555;
  box-sizing: border-box;
}
.btn {
  flex: none;
  width: 22.3px;
  display: flex;
  justify-content: center;
}
.sep {
  flex: none;
  width: 2px;
  height: 19px;
  margin: 0 2px;
  background: #11151b;
  border-right: 1px solid #8a909a;
  box-sizing: border-box;
}
.grip {
  flex: none;
  width: 3px;
  height: 17px;
  margin: 0 1px;
  background: repeating-linear-gradient(#8a909a 0 1px, transparent 1px 2px);
}
.grip.wide {
  margin: 0 3px;
}
.tb-row:first-child .tb-group:nth-child(1) .grip,
.tb-row:last-child .tb-group:nth-child(-n + 2) .grip {
  margin: 0 2px;
}
.drop {
  flex: none;
  width: 14px;
  display: flex;
  justify-content: center;
}
.drop::before {
  content: "";
  border: 3.5px solid transparent;
  border-top: 4px solid #cfd2d6;
  margin-top: 3px;
}
.combo {
  flex: none;
  height: 22px;
  display: flex;
  align-items: center;
  background: #fff;
  color: #222;
  font-size: 12.5px;
  position: relative;
  box-sizing: border-box;
  padding-left: 2px;
}
.combo.dim {
  background: #eef0f2;
  color: #8a8f96;
}
.combo-text {
  white-space: nowrap;
}
.chev {
  position: absolute;
  right: 5px;
  top: 8px;
}
.swatch {
  width: 13px;
  height: 14px;
  background: #ffff00;
  border: 1px solid #222;
}
.lineweight {
  height: 2px;
  background: #555;
  margin-left: 2px;
}

.main {
  flex: 1;
  min-height: 0;
  display: flex;
}
.side {
  flex: none;
  background: #3b4656;
  box-sizing: border-box;
}
.side.left {
  width: 32px;
  padding-left: 5px;
  box-shadow: inset 5px 0 0 #2d3543;
}
.side.right {
  width: 34px;
  padding-left: 3px;
  box-shadow: inset -3px 0 0 #2d3543;
}
.side-panel {
  width: 22px;
  background: #343d4b;
  display: flex;
  flex-direction: column;
  align-items: center;
  padding-top: 2px;
  box-sizing: border-box;
}
.side.left .side-panel {
  height: 438px;
}
.side.right .side-panel {
  width: 24px;
  height: 395px;
}
.hgrip {
  width: 14px;
  height: 3px;
  margin: 2px 0 7px;
  background: repeating-linear-gradient(90deg, #8a909a 0 1px, transparent 1px 2px);
}
.side-btn {
  flex: none;
  height: 21.3px;
  display: flex;
  align-items: center;
}

.canvas {
  flex: none;
  width: 1534px;
  position: relative;
  background: #000;
  overflow: hidden;
}
.drawing {
  display: block;
  font-family: "Liberation Sans", "Noto Sans CJK SC", sans-serif;
}
.cy {
  fill: #00d8d8;
  font-size: 15px;
  text-anchor: middle;
}
.cy.sm {
  font-size: 12px;
  fill: #40e8e8;
  word-spacing: 8px;
}
.lbl {
  fill: #d2d2d2;
  font-size: 15.5px;
  text-anchor: middle;
}
.dim {
  fill: #d2d2d2;
  font-size: 14px;
  text-anchor: middle;
}
.axis-n {
  fill: #e4e4e4;
  font-family: "DejaVu Sans", sans-serif;
  font-size: 17px;
  text-anchor: middle;
}
.lvl {
  fill: #20e020;
  font-size: 11px;
  text-anchor: middle;
}
.ye {
  fill: #e0e000;
  font-size: 15.5px;
}
.ye.hd {
  font-size: 12px;
  font-weight: 700;
  text-anchor: middle;
}
.ye.cj {
  font-size: 13px;
  font-weight: 500;
}
.title-y {
  font-size: 14px;
  letter-spacing: 0.5px;
}
.gtitle {
  fill: #00f000;
  font-size: 12.5px;
  font-weight: 700;
  text-anchor: middle;
}
.cube {
  opacity: 0.75;
}
.cube-top {
  fill: #3c3c3c;
  font-size: 28px;
  font-weight: 300;
  text-anchor: middle;
}
.cube-d {
  fill: #8e8e8e;
  font-size: 18px;
  text-anchor: middle;
}
.wcs {
  fill: #3c3c42;
  font-size: 11px;
}

.cmd-hist {
  position: absolute;
  left: 296px;
  top: 1090px;
  display: flex;
  flex-direction: column;
  align-items: flex-start;
  gap: 5px;
  font-family: "Liberation Mono", "Noto Sans CJK SC", monospace;
  font-size: 12px;
  color: #c4c4c4;
}
.cmd-hist div {
  height: 15px;
  display: flex;
  align-items: center;
  background: #555;
  border-radius: 2px;
  padding: 0 2px;
}
.cmd-bar {
  position: absolute;
  left: 236px;
  top: 1148.5px;
  width: 1060.5px;
  height: 25px;
  display: flex;
}
.cmd-left {
  width: 54px;
  flex: none;
  display: flex;
  align-items: center;
  gap: 5px;
  padding-left: 4px;
  background: #2b323e;
  box-sizing: border-box;
}
.cmd-grip {
  width: 4px;
  height: 18px;
  background: repeating-linear-gradient(#a8acb3 0 1px, transparent 1px 2px);
}
.cmd-input {
  flex: 1;
  display: flex;
  align-items: center;
  padding-left: 3px;
  background: rgba(255, 255, 255, 0.7);
  position: relative;
  border-top: 1px solid rgba(255, 255, 255, 0.25);
}
.small-drop {
  margin-left: 2px;
  margin-top: 3px;
  border: 3px solid transparent;
  border-top: 4px solid #333;
}
.prompt {
  margin-left: 8px;
  color: #777;
  font-style: italic;
}
.up-arrow {
  position: absolute;
  right: 3px;
  top: 9px;
  border: 3.5px solid transparent;
  border-bottom: 4px solid #444;
}

.statusbar {
  flex: none;
  height: 32px;
  display: flex;
  background: #2a3240;
  border-bottom: 1px solid #0a96d8;
  padding-top: 2px;
  box-sizing: border-box;
  position: relative;
}
.layouts {
  width: 403px;
  flex: none;
  display: flex;
  align-items: flex-start;
  gap: 2px;
  padding-left: 15px;
  box-sizing: border-box;
}
.ltab {
  height: 16px;
  width: 46px;
  display: flex;
  align-items: center;
  justify-content: center;
  background: #333b49;
  color: #aab0b9;
  clip-path: polygon(0 0, 100% 0, calc(100% - 5px) 100%, 5px 100%);
}
.ltab.on {
  background: #465062;
  color: #fff;
  font-weight: 700;
}
.ltab.add {
  width: 19px;
  margin-left: 6px;
}
.st-group {
  height: 23px;
  flex: none;
  display: flex;
  align-items: center;
  background: #3b4555;
  color: #d8dade;
}
.st-text {
  text-align: center;
  white-space: nowrap;
  flex: none;
  letter-spacing: -0.2px;
  box-sizing: border-box;
}
.st-text.right {
  text-align: right;
  color: #e8eaec;
  padding-right: 5px;
}
.st-text.left {
  text-align: left;
  padding-left: 7px;
}
.st-btn {
  flex: none;
  height: 23px;
  display: flex;
  align-items: center;
  justify-content: center;
}
.st-btn.on {
  background: #5b8fc4;
}
.st-drop {
  flex: none;
  display: flex;
  justify-content: center;
}
.st-drop::before {
  content: "";
  border: 3.5px solid transparent;
  border-top: 4px solid #cfd2d6;
  margin-top: 4px;
}

.wm {
  position: absolute;
  left: 0;
  top: 0;
  pointer-events: none;
}
.wm-text {
  font-family: "Liberation Sans", "Noto Sans CJK SC", sans-serif;
  font-size: 38px;
  font-weight: 700;
  fill: rgba(255, 255, 255, 0.14);
}
.brand {
  font-family: "Noto Sans CJK SC", sans-serif;
  font-size: 61px;
  font-weight: 500;
  fill: #c8c8c8;
}
.brand-id {
  font-family: "Liberation Sans", sans-serif;
  font-size: 33px;
  font-weight: 700;
  fill: #fff;
}
</style>
